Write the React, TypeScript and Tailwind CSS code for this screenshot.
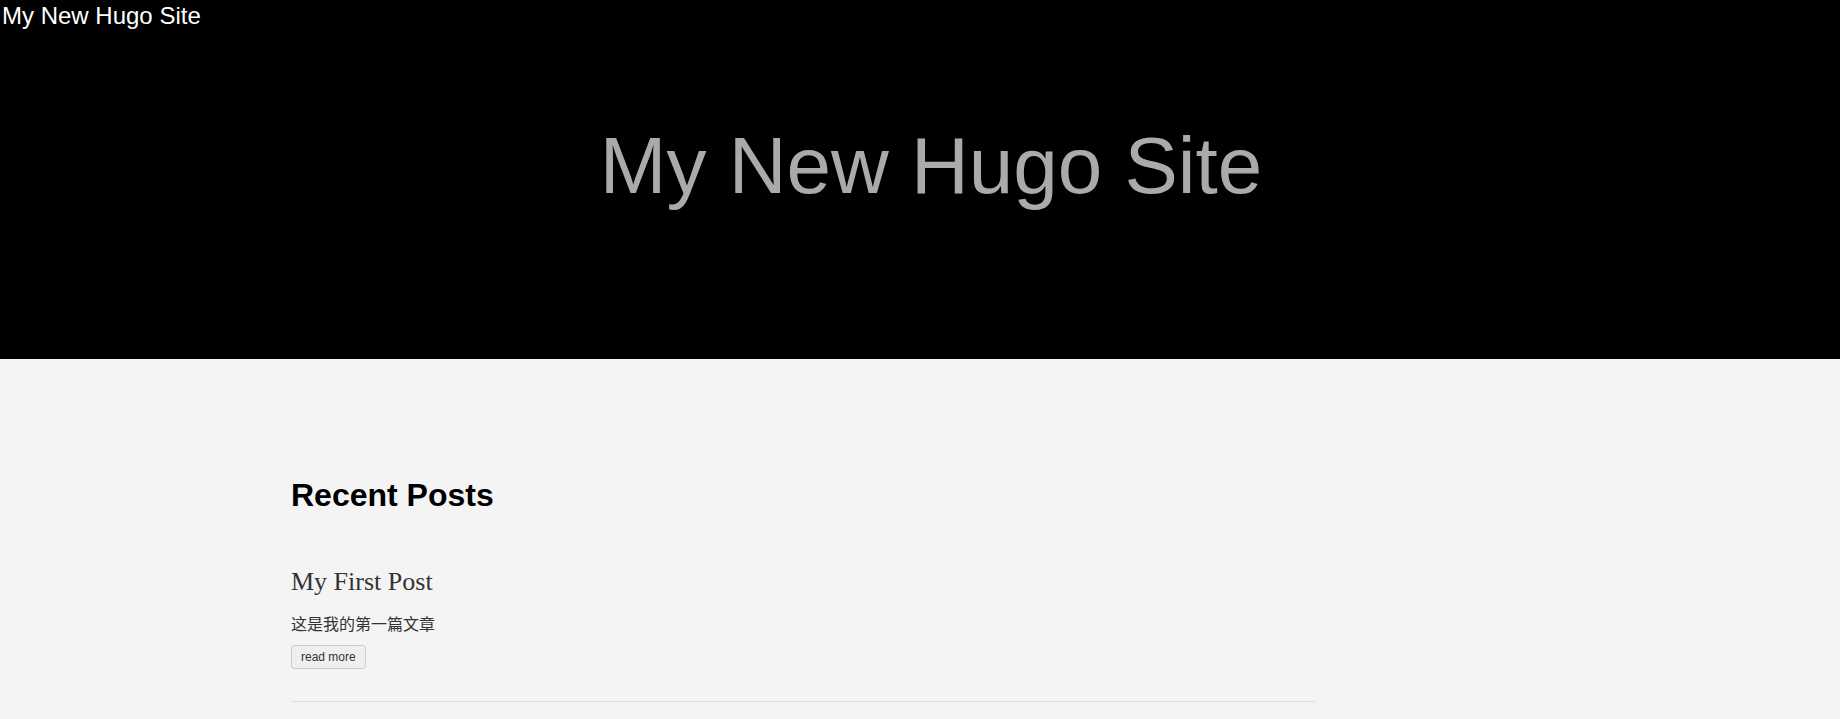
export default function App() {
  const posts = [
    {
      id: "first",
      title: "My First Post",
      summary: "这是我的第一篇文章",
    },
  ];

  return (
    <div className="min-h-[719px] bg-[#f4f4f4] font-['Liberation_Sans',Arial,sans-serif]">
      <header className="h-[359px] bg-black">
        <a href="#" className="block pt-[2px] pl-[2px] text-[24px] leading-[28px] text-white">
          My New Hugo Site
        </a>
        <h1 className="mt-[96px] pl-[22px] text-center text-[80px] leading-none font-normal text-[#aaaaaa]">
          My New Hugo Site
        </h1>
      </header>

      <main className="pt-[118px] pl-[291px]">
        <div className="w-[1024px]">
          <h2 className="text-[32px] leading-[37px] font-bold text-black">Recent Posts</h2>

          {posts.map((post) => (
            <article key={post.id} className="mt-[53px]">
              <h3 className="font-['Liberation_Serif',Georgia,serif] text-[26px] leading-[30px] text-[#333333]">
                {post.title}
              </h3>
              <p className="mt-[16px] font-['Noto_Sans_CJK_SC',sans-serif] text-[16px] leading-[20px] text-[#333333]">
                {post.summary}
              </p>
              <button className="mt-[12px] block h-[24px] rounded-[3px] border border-[#cccccc] bg-[#efefef] px-[9px] text-[12px] leading-none text-[#333333]">
                read more
              </button>
              <hr className="mt-[32px] border-0 border-t border-[#dddddd]" />
            </article>
          ))}
        </div>
      </main>
    </div>
  );
}
